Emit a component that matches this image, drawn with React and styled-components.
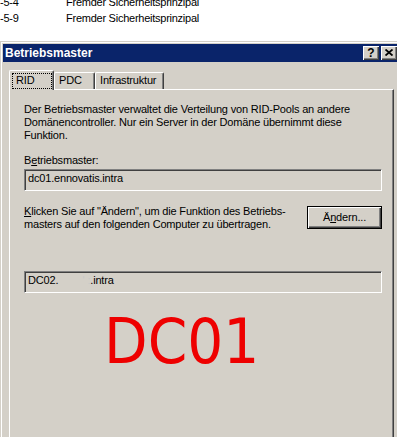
import React from "react";
import styled, { createGlobalStyle } from "styled-components";

const GlobalStyle = createGlobalStyle`
  html, body {
    margin: 0;
    padding: 0;
    background: #ffffff;
    overflow: hidden;
  }
  body {
    font-family: "Liberation Sans", Arial, sans-serif;
    font-size: 11px;
    color: #000000;
  }
`;

const Page = styled.div`
  width: 397px;
  height: 437px;
  overflow: hidden;
  background: #ffffff;
`;

// account list behind the dialog
const List = styled.div`
  margin-top: -6px;
`;
const ListRow = styled.div`
  display: flex;
  height: 16px;
  line-height: 16px;
  letter-spacing: -0.25px;
  white-space: nowrap;
`;
const SidCell = styled.span`
  flex: none;
  width: 66px;
`;

const Window = styled.div`
  box-sizing: border-box;
  width: 402px;
  height: 440px;
  margin-top: 15px;
  padding: 2px 2px 0;
  background: #d4d0c8;
  border: 1px solid #d4d0c8;
  border-bottom: none;
  box-shadow: inset 1px 1px #ffffff;
`;

const TitleBar = styled.div`
  display: flex;
  align-items: center;
  height: 18px;
  padding: 0 2px;
  background: #0a246a;
`;
const Title = styled.span`
  flex: 1;
  color: #ffffff;
  font-size: 12px;
  font-weight: bold;
  line-height: 18px;
`;
const CaptionButtons = styled.div`
  display: flex;
  gap: 2px;
`;
const CaptionButton = styled.div`
  box-sizing: border-box;
  display: flex;
  align-items: center;
  justify-content: center;
  width: 16px;
  height: 14px;
  background: #d4d0c8;
  box-shadow: inset 1px 1px #ffffff, inset -1px -1px #404040,
    inset -2px -2px #808080;
  font-size: 12px;
  font-weight: bold;
  line-height: 14px;
  padding-bottom: 1px;
`;

const Body = styled.div`
  padding: 8px 0 0 6px;
  letter-spacing: -0.18px;
`;
const TabControl = styled.div`
  width: 385px;
`;
const TabStrip = styled.div`
  display: flex;
  align-items: flex-end;
  height: 19px;
`;
const Tab = styled.div`
  box-sizing: border-box;
  position: relative;
  z-index: ${(p) => (p.$active ? 1 : 0)};
  width: ${(p) => p.$w}px;
  height: ${(p) => (p.$active ? 20 : 17)}px;
  margin-bottom: ${(p) => (p.$active ? -1 : 0)}px;
  padding: ${(p) => (p.$active ? "2px 0 0 2px" : "1px 0 0 4px")};
  background: #d4d0c8;
  border-top: 1px solid #ffffff;
  border-left: 1px solid #ffffff;
  border-right: 1px solid #404040;
  border-radius: 2px 2px 0 0;
  box-shadow: inset -1px 0 #808080;
  line-height: 13px;
  white-space: nowrap;
`;
const FocusRing = styled.div`
  box-sizing: border-box;
  width: 40px;
  height: 16px;
  padding-left: 3px;
  border: 1px dotted #000000;
  line-height: 13px;
`;
const Panel = styled.div`
  height: 400px;
  padding: 13px 11px 0 14px;
  border-top: 1px solid #ffffff;
  border-left: 1px solid #ffffff;
  border-right: 1px solid #404040;
  box-shadow: inset -1px 0 #808080;
`;

const Text = styled.div`
  line-height: 13px;
  white-space: nowrap;
  margin-top: ${(p) => p.$top || 0}px;
`;
const Key = styled.span`
  text-decoration: underline;
`;
const Field = styled.div`
  box-sizing: border-box;
  height: 22px;
  margin-top: ${(p) => p.$top}px;
  padding: 2px 0 0 3px;
  border-top: 1px solid #808080;
  border-left: 1px solid #808080;
  border-right: 1px solid #ffffff;
  border-bottom: 1px solid #ffffff;
  box-shadow: inset 1px 1px #404040, inset -1px -1px #d4d0c8;
  line-height: 13px;
  white-space: nowrap;
`;
const Redacted = styled.span`
  display: inline-block;
  width: 32px;
  color: #c8c8c8;
  text-align: right;
`;
const ActionRow = styled.div`
  display: flex;
  justify-content: space-between;
  align-items: flex-start;
  margin-top: 14px;
`;
const PushButton = styled.div`
  box-sizing: border-box;
  width: 75px;
  height: 23px;
  margin-top: 1px;
  border: 1px solid #000000;
  box-shadow: inset 1px 1px #ffffff, inset -1px -1px #404040,
    inset -2px -2px #808080;
  text-align: center;
  line-height: 20px;
`;
const Stamp = styled.div`
  margin: 17px 0 0 80px;
  font-family: "DejaVu Sans Condensed", "DejaVu Sans", sans-serif;
  font-stretch: condensed;
  font-size: 63px;
  line-height: 1;
  letter-spacing: 0;
  color: #ee0000;
`;

const CloseGlyph = () => (
  <svg width="8" height="7" viewBox="0 0 8 7">
    <path d="M0.5 0.5 L7.5 6.5 M7.5 0.5 L0.5 6.5" stroke="#000" strokeWidth="1.8" />
  </svg>
);

const rows = [
  ["-5-4", "Fremder Sicherheitsprinzipal"],
  ["-5-9", "Fremder Sicherheitsprinzipal"],
];

const App = () => {
  return (
    <Page>
      <GlobalStyle />
      <List>
        {rows.map((r, i) => (
          <ListRow key={i}>
            <SidCell>{r[0]}</SidCell>
            <span>{r[1]}</span>
          </ListRow>
        ))}
      </List>
      <Window>
        <TitleBar>
          <Title>Betriebsmaster</Title>
          <CaptionButtons>
            <CaptionButton>?</CaptionButton>
            <CaptionButton>
              <CloseGlyph />
            </CaptionButton>
          </CaptionButtons>
        </TitleBar>
        <Body>
          <TabControl>
            <TabStrip>
              <Tab $active $w={45}>
                <FocusRing>RID</FocusRing>
              </Tab>
              <Tab $w={41}>PDC</Tab>
              <Tab $w={69}>Infrastruktur</Tab>
            </TabStrip>
            <Panel>
              <Text>
                Der Betriebsmaster verwaltet die Verteilung von RID-Pools an andere
                <br />
                Domänencontroller. Nur ein Server in der Domäne übernimmt diese
                <br />
                Funktion.
              </Text>
              <Text $top={12}>
                B<Key>e</Key>triebsmaster:
              </Text>
              <Field $top={2}>dc01.ennovatis.intra</Field>
              <ActionRow>
                <Text>
                  <Key>K</Key>licken Sie auf "Ändern", um die Funktion des Betriebs-
                  <br />
                  masters auf den folgenden Computer zu übertragen.
                </Text>
                <PushButton>
                  Ä<Key>n</Key>dern...
                </PushButton>
              </ActionRow>
              <Field $top={40}>
                DC02.<Redacted>' :</Redacted>.intra
              </Field>
              <Stamp>DC01</Stamp>
            </Panel>
          </TabControl>
        </Body>
      </Window>
    </Page>
  );
};

export default App;
